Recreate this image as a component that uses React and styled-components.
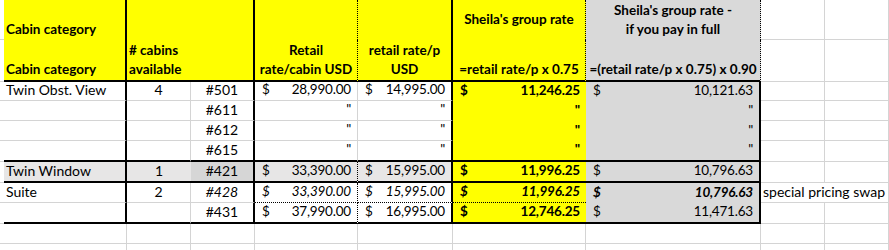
import React from 'react';
import styled, { createGlobalStyle } from 'styled-components';

const GlobalStyle = createGlobalStyle`
  html, body { margin: 0; padding: 0; background: #fff; overflow: hidden; }
  body { font-family: Lato, "Noto Sans", sans-serif; }
`;

const COLS = [4, 123, 64, 64, 103, 95, 133, 175, 64, 64];
const ROWS = [40, 42, 19, 20, 20, 21, 21, 20, 21, 20, 20];

const YELLOW = '#ffff00';
const GREY = '#d9d9d9';
const LIGHT = '#e7e6e6';
const DARK = '#d6d6d6';

const BORDERS = {
  g: '1px solid #d4d4d4',
  k: '2px solid #000',
  d: '1px dotted #000',
  n: 'none',
};

const JUSTIFY = { top: 'flex-start', mid: 'center', bot: 'flex-end' };

const Sheet = styled.div`
  display: grid;
  grid-template-columns: ${COLS.map((c) => `${c}px`).join(' ')};
  grid-template-rows: ${ROWS.map((r) => `${r}px`).join(' ')};
  width: 889px;
  height: 250px;
  overflow: hidden;
  font-family: Lato, "Noto Sans", sans-serif;
  font-size: 14px;
  color: #000;
`;

const Cell = styled.div`
  box-sizing: border-box;
  grid-column: span ${(p) => p.$span || 1};
  display: flex;
  flex-direction: column;
  justify-content: ${(p) => JUSTIFY[p.$v || 'bot']};
  text-align: ${(p) => p.$align || 'left'};
  background: ${(p) => p.$bg || '#fff'};
  border-right: ${(p) => BORDERS[p.$r || 'g']};
  border-bottom: ${(p) => BORDERS[p.$b || 'g']};
  font-size: ${(p) => (p.$head ? '13.5px' : '14px')};
  font-weight: ${(p) => (p.$bold ? 700 : 400)};
  font-style: ${(p) => (p.$italic ? 'italic' : 'normal')};
  padding: 0 2px 1px;
  line-height: 19px;
  white-space: nowrap;
  overflow: visible;
`;

const HeadLine = styled.span`
  display: block;
`;

const Acct = styled.div`
  display: flex;
  justify-content: ${(p) => (p.$ditto ? 'flex-end' : 'space-between')};
  padding: 0 4px 0 5px;
  font-size: 13.5px;
  letter-spacing: -0.2px;
`;

const Money = ({ v }) => {
  if (v === '"') return <Acct $ditto>"</Acct>;
  return (
    <Acct>
      <span>$</span>
      <span>{v}</span>
    </Acct>
  );
};

const Lines = ({ lines }) => lines.map((l, i) => <HeadLine key={i}>{l}</HeadLine>);

function headerCells() {
  return [
    // row 1
    <Cell key="h1-0" $r="g" $b="g" />,
    <Cell key="h1-a" $bg={YELLOW} $r="k" $b="n" $bold $head>Cabin category</Cell>,
    <Cell key="h1-b" $bg={YELLOW} $r="n" $b="n" />,
    <Cell key="h1-c" $bg={YELLOW} $r="k" $b="n" />,
    <Cell key="h1-d" $bg={YELLOW} $r="d" $b="n" />,
    <Cell key="h1-e" $bg={YELLOW} $r="k" $b="n" />,
    <Cell key="h1-f" $bg={YELLOW} $r="d" $b="n" $bold $head $align="center" $v="mid">Sheila's group rate</Cell>,
    <Cell key="h1-g" $bg={GREY} $r="d" $b="n" $bold $head $align="center" $v="mid">
      <Lines lines={["Sheila's group rate -", 'if you pay in full']} />
    </Cell>,
    <Cell key="h1-h" />,
    <Cell key="h1-i" />,
    // row 2
    <Cell key="h2-0" $r="g" $b="g" />,
    <Cell key="h2-a" $bg={YELLOW} $r="k" $b="k" $bold $head>Cabin category</Cell>,
    <Cell key="h2-b" $bg={YELLOW} $r="n" $b="k" $bold $head>
      <Lines lines={['# cabins', 'available']} />
    </Cell>,
    <Cell key="h2-c" $bg={YELLOW} $r="k" $b="k" />,
    <Cell key="h2-d" $bg={YELLOW} $r="d" $b="k" $bold $head $align="center">
      <Lines lines={['Retail', 'rate/cabin USD']} />
    </Cell>,
    <Cell key="h2-e" $bg={YELLOW} $r="k" $b="k" $bold $head $align="center">
      <Lines lines={['retail rate/p', 'USD']} />
    </Cell>,
    <Cell key="h2-f" $bg={YELLOW} $r="d" $b="k" $bold $head $align="center">=retail rate/p x 0.75</Cell>,
    <Cell key="h2-g" $bg={GREY} $r="d" $b="k" $bold $head $align="center">=(retail rate/p x 0.75) x 0.90</Cell>,
    <Cell key="h2-h" />,
    <Cell key="h2-i" />,
  ];
}

const DATA = [
  { id: 'r1', a: 'Twin Obst. View', b: '4', c: '#501', d: '28,990.00', e: '14,995.00', f: '11,246.25', g: '10,121.63', bottom: 'g' },
  { id: 'r2', c: '#611', d: '"', e: '"', f: '"', g: '"', bottom: 'g' },
  { id: 'r3', c: '#612', d: '"', e: '"', f: '"', g: '"', bottom: 'g' },
  { id: 'r4', c: '#615', d: '"', e: '"', f: '"', g: '"', bottom: 'k' },
  { id: 'r5', a: 'Twin Window', b: '1', c: '#421', d: '33,390.00', e: '15,995.00', f: '11,996.25', g: '10,796.63', bottom: 'k', shade: true, dotRight: true },
  { id: 'r6', a: 'Suite', b: '2', c: '#428', d: '33,390.00', e: '15,995.00', f: '11,996.25', g: '10,796.63', bottom: 'g', italic: true, dotBottom: true, dotRight: true, note: 'special pricing swap' },
  { id: 'r7', c: '#431', d: '37,990.00', e: '16,995.00', f: '12,746.25', g: '11,471.63', bottom: 'k', dotRight: true },
];

function dataCells(row) {
  const { id, a, b, c, d, e, f, g, bottom, shade, italic, dotBottom, dotRight, note } = row;
  const fillBottom = bottom === 'k' ? 'k' : 'n';
  const moneyBottom = dotBottom ? 'd' : bottom;
  const cells = [
    <Cell key={`${id}-0`} $r="g" $b="g" />,
    <Cell key={`${id}-a`} $r="k" $b={bottom} $bg={shade ? LIGHT : undefined}>{a}</Cell>,
    <Cell key={`${id}-b`} $r={shade ? 'n' : 'g'} $b={bottom} $bg={shade ? LIGHT : undefined} $align="center">{b}</Cell>,
    <Cell key={`${id}-c`} $r="k" $b={bottom} $bg={shade ? DARK : undefined} $align="center" $italic={italic}>{c}</Cell>,
    <Cell key={`${id}-d`} $r={dotRight ? 'd' : 'g'} $b={moneyBottom} $bg={shade ? LIGHT : undefined} $italic={italic}>
      <Money v={d} />
    </Cell>,
    <Cell key={`${id}-e`} $r="k" $b={moneyBottom} $bg={shade ? LIGHT : undefined} $italic={italic}>
      <Money v={e} />
    </Cell>,
    <Cell key={`${id}-f`} $r="n" $b={dotBottom ? 'd' : fillBottom} $bg={YELLOW} $bold $italic={italic}>
      <Money v={f} />
    </Cell>,
    <Cell key={`${id}-g`} $r="k" $b={fillBottom} $bg={GREY} $bold={italic} $italic={italic}>
      <Money v={g} />
    </Cell>,
  ];
  if (note) {
    cells.push(<Cell key={`${id}-h`} $span={2}>{note}</Cell>);
  } else {
    cells.push(<Cell key={`${id}-h`} />, <Cell key={`${id}-i`} />);
  }
  return cells;
}

function emptyRow(id) {
  return COLS.map((_, i) => <Cell key={`${id}-${i}`} />);
}

export default function App() {
  return (
    <>
      <GlobalStyle />
      <Sheet>
        {headerCells()}
        {DATA.map((row) => dataCells(row))}
        {emptyRow('e1')}
        {emptyRow('e2')}
      </Sheet>
    </>
  );
}
